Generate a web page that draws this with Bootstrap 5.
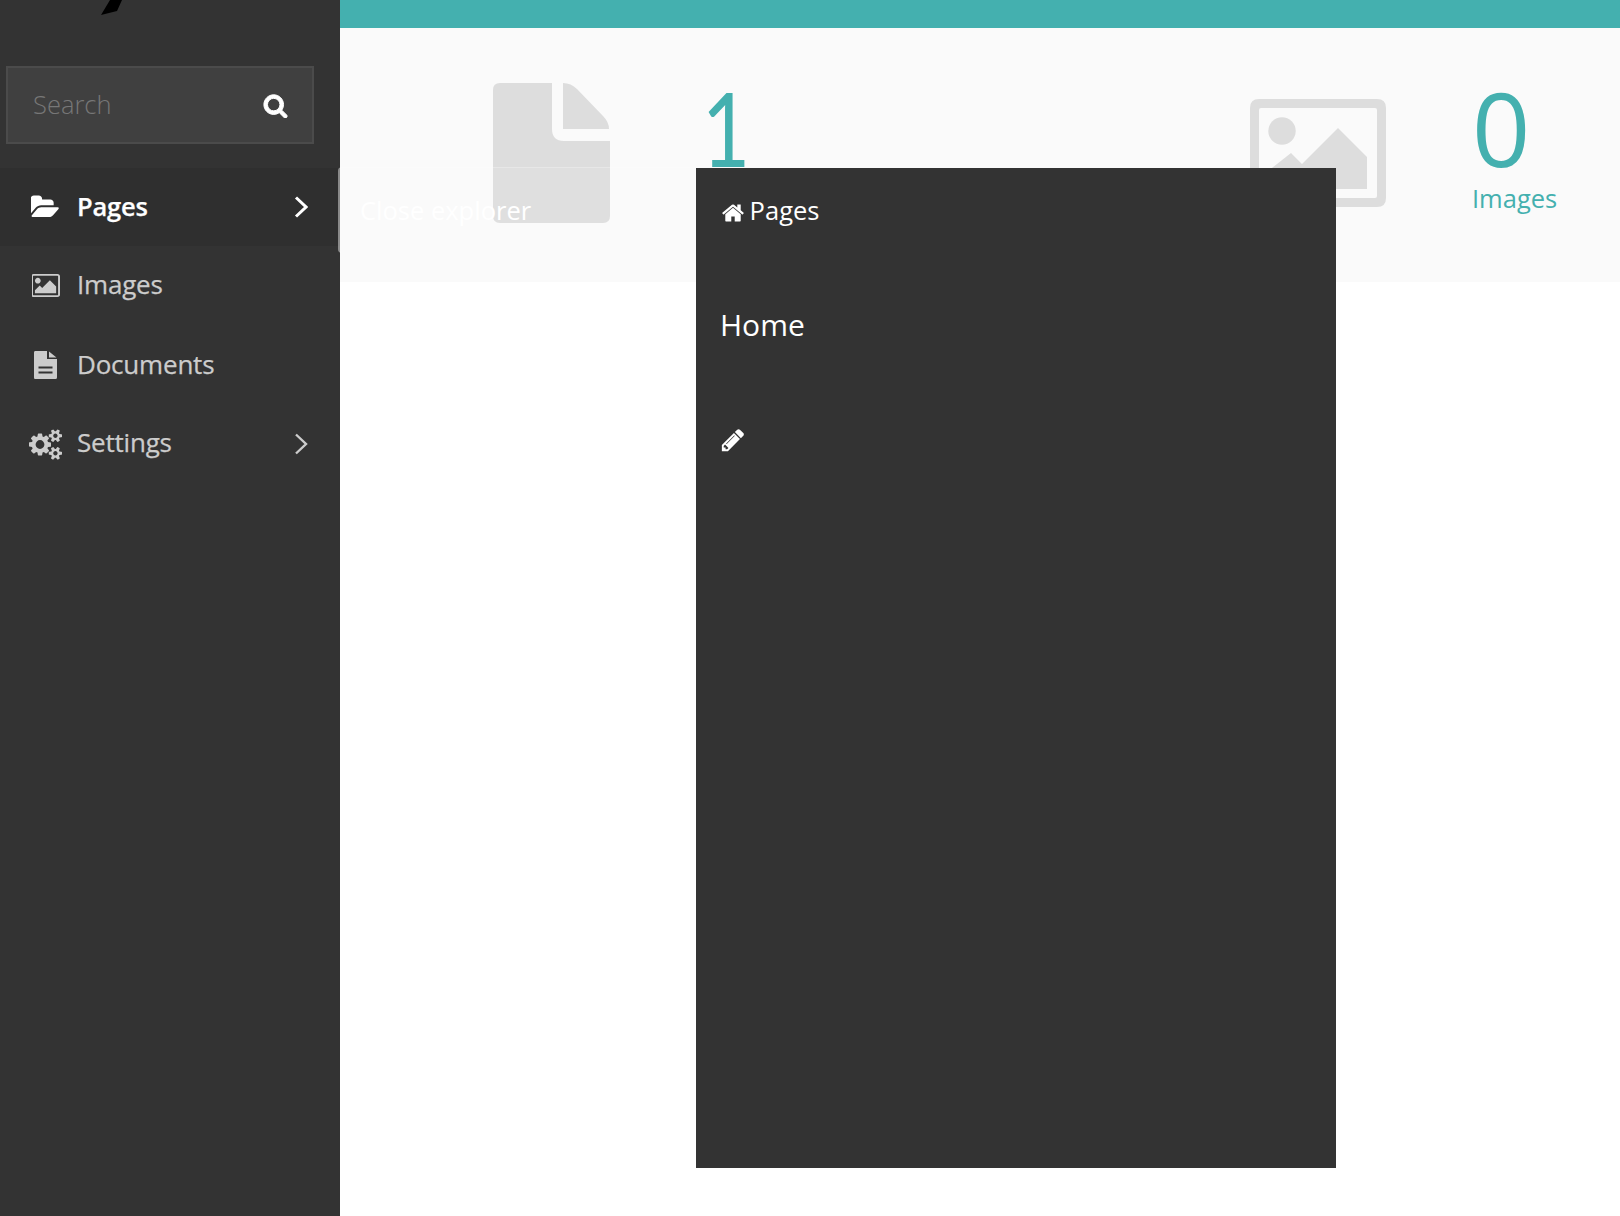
<!DOCTYPE html>
<html lang="en">
<head>
<meta charset="utf-8">
<title>Pages</title>
<link href="https://cdn.jsdelivr.net/npm/bootstrap@5.3.0/dist/css/bootstrap.min.css" rel="stylesheet">
<style>
html,body{height:1216px;overflow:hidden}
body{font-family:"Open Sans",sans-serif;background:#fff;color:#333;position:relative}
.shell{height:1216px}
.side{width:340px;background:#333;flex:none}
.logo-slot{height:66px}
.logo-slot svg{display:block}
.searchbox{width:308px;height:78px;margin-left:6px;background:#404040;border:2px solid #4b4b4b;padding:0 24px 0 25px}
.searchbox input{background:transparent;border:0;outline:0;flex:1;min-width:0;font-size:25.5px;font-weight:300;color:#fff;padding:0 0 2px;font-family:"Open Sans",sans-serif}
.searchbox input::placeholder{color:#777;opacity:1}
.side-list{margin-top:24px}
.side-row{height:79.25px;padding:0 32px 0 32px;color:#ccc;font-size:26px;font-weight:500;letter-spacing:-.2px;text-decoration:none;-webkit-text-stroke:.25px currentColor}
.side-row>span:nth-of-type(2){padding-bottom:3px}
.side-row.doc-row>span:nth-of-type(2){padding-bottom:1px}
.side-row.on{height:78px;background:#2f2f2f;color:#fff;font-size:25.5px;font-weight:600;padding-left:31px}
.side-row.on>span:nth-of-type(2){padding-bottom:1px}
.side-ico{width:45px;flex:none;display:flex}
.side-row.on .side-ico{width:46px}
.gears{margin-left:-3px;flex:none}
.main-col{min-width:0}
.topbar{height:28px;background:#44b0af;flex:none}
.stats{height:254px;background:#fafafa;flex:none}
.stat-a{padding-left:153px;padding-top:55px}
.stat-b{padding-left:270px;padding-top:55px}
.stat-text-a{margin-left:91px}
.stat-text-b{margin-left:86px}
.stat-num{font-size:102px;line-height:100px;color:#44b0af;margin-top:-5px}
.digit-foot{font-family:Lato,sans-serif;font-size:102px;padding-left:1px;transform:scaleX(.82);transform-origin:left center}
.stat-lab{font-size:25.5px;color:#44b0af;line-height:34px;margin-top:3px}
.closer{position:absolute;left:338px;top:167px;width:358px;height:86px;background:rgba(255,255,255,.07);border-top:1px solid rgba(255,255,255,.25);border-left:2px solid rgba(255,255,255,.4);border-radius:4px 0 0 4px;color:#fff;font-size:25.5px;padding:0 20px}
.explorer{position:absolute;left:696px;top:168px;width:640px;height:1000px;background:#333;color:#fff}
.crumb{font-size:25.5px;line-height:34px;padding:25px 24px 0}
.crumb svg{fill:#fff;vertical-align:-5px;margin-right:-3px}
.page-name{font-size:30px;line-height:40px;padding:78px 24px 0}
.edit-ico{padding:82px 24px 0}
.edit-ico svg{fill:#fff;display:block}
</style>
</head>
<body>
<div class="shell d-flex">
  <aside class="side d-flex flex-column">
    <div class="logo-slot"><svg width="130" height="16" viewBox="0 0 130 16"><polygon points="110,0 122,0 117,11 101,15" fill="#000"/></svg></div>
    <div class="searchbox d-flex align-items-center">
      <input type="text" placeholder="Search" aria-label="Search">
      <svg width="25" height="25" viewBox="0 0 1792 1792" fill="#fff" stroke="#fff" stroke-width="70"><path d="M1216 832q0-185-131.500-316.500t-316.500-131.500-316.500 131.500-131.500 316.500 131.500 316.500 316.500 131.500 316.500-131.500 131.500-316.500zm512 832q0 52-38 90t-90 38q-54 0-90-38l-343-342q-179 124-399 124-143 0-273.500-55.500t-225-150-150-225-55.500-273.500 55.500-273.500 150-225 225-150 273.500-55.500 273.500 55.500 225 150 150 225 55.500 273.500q0 220-124 399l343 343q37 37 37 90z"/></svg>
    </div>
    <nav class="side-list d-flex flex-column">
      <a class="side-row on d-flex align-items-center" href="#">
        <span class="side-ico"><svg width="29" height="27" viewBox="0 0 1920 1792" fill="#fff"><path d="M1845 931q0 35-35 74l-336 396q-43 51-120.500 86.500t-143.500 35.500h-1088q-34 0-60.500-13t-26.500-43q0-35 35-74l336-396q43-51 120.500-86.500t143.500-35.500h1088q34 0 60.500 13t26.500 43zm-343-344v160h-832q-94 0-197 47.500t-164 119.500l-337 396-5 6q0-4-.5-12.500t-.5-12.500v-960q0-92 66-158t158-66h320q92 0 158 66t66 158v32h544q92 0 158 66t66 158z"/></svg></span>
        <span class="flex-grow-1">Pages</span>
        <svg width="14" height="22" viewBox="0 0 14 22" fill="none" stroke="#fff" stroke-width="3"><path d="M2 1.500 12 11 2 20.500"/></svg>
      </a>
      <a class="side-row d-flex align-items-center" href="#">
        <span class="side-ico"><svg width="29" height="27" viewBox="0 0 1920 1792" fill="#ccc"><path d="M576 576q0 80-56 136t-136 56-136-56-56-136 56-136 136-56 136 56 56 136zm1024 384v448h-1408v-192l320-320 160 160 512-512zm96-704h-1600q-13 0-22.500 9.500t-9.500 22.500v1216q0 13 9.500 22.500t22.500 9.500h1600q13 0 22.500-9.500t9.500-22.500v-1216q0-13-9.500-22.500t-22.500-9.500zm160 32v1216q0 66-47 113t-113 47h-1600q-66 0-113-47t-47-113v-1216q0-66 47-113t113-47h1600q66 0 113 47t47 113z"/></svg></span>
        <span class="flex-grow-1">Images</span>
      </a>
      <a class="side-row doc-row d-flex align-items-center" href="#">
        <span class="side-ico"><svg width="28" height="28" viewBox="3 0 28 28" fill="#ccc"><path fill-rule="evenodd" d="M6 0H18V8H28V26.500Q28 28 26.500 28H6Q5 28 5 26.500V1.500Q5 0 6 0ZM20 .5 27.500 6.500H20ZM9.500 15.500H23.500V17.500H9.500ZM9.500 20.500H23.500V22.500H9.500Z"/></svg></span>
        <span class="flex-grow-1">Documents</span>
      </a>
      <a class="side-row d-flex align-items-center" href="#">
        <span class="side-ico"><svg class="gears" width="33" height="31" viewBox="0 0 1920 1792" fill="#ccc"><path d="M896 896q0-106-75-181t-181-75-181 75-75 181 75 181 181 75 181-75 75-181zm768 512q0-52-38-90t-90-38-90 38-38 90q0 53 37.500 90.500t90.500 37.500 90.500-37.500 37.500-90.500zm0-1024q0-52-38-90t-90-38-90 38-38 90q0 53 37.500 90.500t90.500 37.500 90.500-37.500 37.500-90.500zm-384 421v185q0 10-7 19.500t-16 10.500l-155 24q-11 35-32 76 34 48 90 115 7 11 7 20 0 12-7 19-23 30-82.500 89.500t-78.500 59.500q-11 0-21-7l-115-90q-37 19-77 31-11 108-23 155-7 24-30 24h-186q-11 0-20-7.500t-10-17.500l-23-153q-34-10-75-31l-118 89q-7 7-20 7-11 0-21-8-144-133-144-160 0-9 7-19 10-14 41-53t47-61q-23-44-35-82l-152-24q-10-1-17-9.500t-7-19.500v-185q0-10 7-19.500t16-10.500l155-24q11-35 32-76-34-48-90-115-7-11-7-20 0-12 7-20 22-30 82-89t79-59q11 0 21 7l115 90q34-18 77-32 11-108 23-154 7-24 30-24h186q11 0 20 7.500t10 17.500l23 153q34 10 75 31l118-89q8-7 20-7 11 0 21 8 144 133 144 160 0 8-7 19-12 16-42 54t-45 60q23 48 34 82l152 23q10 2 17 10.500t7 19.500zm640 533v140q0 16-149 31-12 27-30 52 51 113 51 138 0 4-4 7-122 71-124 71-8 0-46-47t-52-68q-20 2-30 2t-30-2q-14 21-52 68t-46 47q-2 0-124-71-4-3-4-7 0-25 51-138-18-25-30-52-149-15-149-31v-140q0-16 149-31 13-29 30-52-51-113-51-138 0-4 4-7 4-2 35-20t59-34 30-16q8 0 46 46.500t52 67.500q20-2 30-2t30 2q51-71 92-112l6-2q4 0 124 70 4 3 4 7 0 25-51 138 17 23 30 52 149 15 149 31zm0-1024v140q0 16-149 31-12 27-30 52 51 113 51 138 0 4-4 7-122 71-124 71-8 0-46-47t-52-68q-20 2-30 2t-30-2q-14 21-52 68t-46 47q-2 0-124-71-4-3-4-7 0-25 51-138-18-25-30-52-149-15-149-31v-140q0-16 149-31 13-29 30-52-51-113-51-138 0-4 4-7 4-2 35-20t59-34 30-16q8 0 46 46.500t52 67.500q20-2 30-2t30 2q51-71 92-112l6-2q4 0 124 70 4 3 4 7 0 25-51 138 17 23 30 52 149 15 149 31z"/></svg></span>
        <span class="flex-grow-1">Settings</span>
        <svg width="14" height="22" viewBox="0 0 14 22" fill="none" stroke="#ccc" stroke-width="2.4"><path d="M2 1.500 12 11 2 20.500"/></svg>
      </a>
    </nav>
  </aside>
  <main class="main-col flex-grow-1 d-flex flex-column">
    <div class="topbar"></div>
    <div class="stats row g-0">
      <div class="col-6 stat-a d-flex align-items-start">
        <svg width="117" height="140" viewBox="0 0 117 140" fill="#ddd"><path d="M7 0H59V46Q59 58 71 58H117V133Q117 140 110 140H7Q0 140 0 133V7Q0 0 7 0ZM70 0Q78 0 84 6L110 33Q116 39 116 46H70Z"/></svg>
        <div class="stat-text-a">
          <div class="stat-num digit-foot">1</div>
        </div>
      </div>
      <div class="col-6 stat-b d-flex align-items-start">
        <svg class="mt-3" width="136" height="108" viewBox="0 0 136 108" fill="#ddd"><path fill-rule="evenodd" d="M9 0H127Q136 0 136 9V99Q136 108 127 108H9Q0 108 0 99V9Q0 0 9 0ZM11 9Q9 9 9 11V97Q9 99 11 99H125Q127 99 127 97V11Q127 9 125 9Z"/><circle cx="32" cy="32" r="13.700"/><path d="M18 72 41 54 52 65 88 29 117 58V90H18Z"/></svg>
        <div class="stat-text-b">
          <div class="stat-num">0</div>
          <div class="stat-lab">Images</div>
        </div>
      </div>
    </div>
  </main>
</div>
<a class="closer d-flex align-items-center text-decoration-none" href="#">Close explorer</a>
<section class="explorer">
  <div class="crumb"><svg width="26" height="24" viewBox="0 0 1792 1792"><path d="M1472 992v480q0 26-19 45t-45 19h-384v-384h-256v384h-384q-26 0-45-19t-19-45v-480q0-1 .5-3t.5-3l575-474 575 474q1 2 1 6zm223-69l-62 74q-8 9-21 11h-3q-13 0-21-7l-692-577-692 577q-12 8-24 7-13-2-21-11l-62-74q-8-10-7-23.500t11-21.500l719-599q32-26 76-26t76 26l244 204v-195q0-14 9-23t23-9h192q14 0 23 9t9 23v408l219 182q10 8 11 21.500t-7 23.500z"/></svg> Pages</div>
  <div class="page-name">Home</div>
  <div class="edit-ico"><svg width="26" height="26" viewBox="0 0 1792 1792"><path d="M491 1536l91-91-235-235-91 91v107h128v128h107zm523-928q0-22-22-22-10 0-17 7l-542 542q-7 7-7 17 0 22 22 22 10 0 17-7l542-542q7-7 7-17zm-54-192l416 416-832 832h-416v-416zm683 96q0 53-37 90l-166 166-416-416 166-165q36-38 90-38 53 0 91 38l235 234q37 39 37 91z"/></svg></div>
</section>
<script src="https://cdn.jsdelivr.net/npm/bootstrap@5.3.0/dist/js/bootstrap.bundle.min.js"></script>
</body>
</html>
